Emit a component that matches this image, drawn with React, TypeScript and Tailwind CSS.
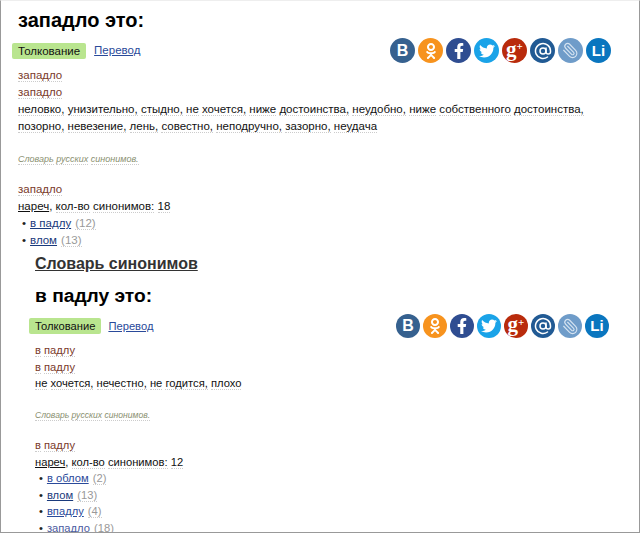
import React from "react";
import { FaOdnoklassniki, FaFacebookF, FaTwitter } from "react-icons/fa";
import { AtSign, Paperclip } from "lucide-react";

const W = ({ children, className = "" }: { children: React.ReactNode; className?: string }) => (
  <span className={"border-b border-dotted border-[#ccc] " + className}>{children}</span>
);

const Words = ({ text, className = "" }: { text: string; className?: string }) => (
  <>
    {text.split(" ").map((w, i, a) => (
      <React.Fragment key={i}>
        <W className={className}>{w}</W>
        {i < a.length - 1 ? " " : ""}
      </React.Fragment>
    ))}
  </>
);

const Social = ({ big }: { big: boolean }) => {
  const c = big ? "h-[25px] w-[25px]" : "h-6 w-6";
  const base = "flex items-center justify-center rounded-full text-white shrink-0 " + c;
  return (
    <div className="flex gap-[3px]">
      <div className={base + " bg-[#36618f] text-[16px] font-bold"}>В</div>
      <div className={base + " bg-[#f7931e]"}><FaOdnoklassniki size={16} /></div>
      <div className={base + " bg-[#2f4d91]"}><FaFacebookF size={16} /></div>
      <div className={base + " bg-[#1aa3e8]"}><FaTwitter size={16} /></div>
      <div className={base + " bg-[#b92b0c] font-['Liberation_Serif',serif] font-bold"}>
        <span className="-mt-[3px] text-[21px] leading-[19px]">g</span>
        <span className="-mt-[8px] text-[11px] leading-[11px]">+</span>
      </div>
      <div className={base + " bg-[#215a94]"}><AtSign size={18} strokeWidth={2} /></div>
      <div className={base + " bg-[#6f9cc9]"}><Paperclip size={17} strokeWidth={1.6} className="-scale-x-100 text-[#d5e3f1]" /></div>
      <div className={base + " bg-[#0a76bf] text-[15px] font-bold"}>Li</div>
    </div>
  );
};

const Tab = ({ gap }: { gap: string }) => (
  <span className={"inline-block h-4 rounded-[2px] bg-[#b9e58f] px-[6px] leading-4 text-[#111] " + gap}>
    Толкование
  </span>
);

const Item = ({ name, n, color = "text-[#1a3a7c]" }: { name: string; n: number; color?: string }) => (
  <li className="flex items-baseline">
    <span className="mr-[4px] text-[#222]">•</span>
    <a className={"underline " + color}>{name}</a>
    <span className="ml-[4px] text-[#999]"><W>({n})</W></span>
  </li>
);

export default function App() {
  return (
    <div className="box-border h-[533px] w-[640px] overflow-hidden border border-[#999] border-t-[#eee] bg-white font-['Liberation_Sans',Arial,sans-serif]">
      {/* first entry */}
      <section className="pl-[17px] text-[11.5px] leading-[17px] text-[#222]">
        <h1 className="mt-[7px] h-[25px] text-[20px] font-bold leading-[25px] text-black">западло это:</h1>
        <div className="mt-[5px] -ml-[6px] flex items-center justify-between pr-[28px]">
          <div className="flex items-center">
            <Tab gap="mr-[8px]" />
            <a className="text-[#2a4a9a] underline">Перевод</a>
          </div>
          <Social big />
        </div>
        <div className="mt-[4px] text-[#7a3a2a]"><W>западло</W></div>
        <div className="text-[#7a3a2a]"><W>западло</W></div>
        <p className="pr-[30px] text-[#111]">
          <Words text="неловко, унизительно, стыдно, не хочется, ниже достоинства, неудобно, ниже собственного достоинства, позорно, невезение, лень, совестно, неподручно, зазорно, неудача" />
        </p>
        <p className="mt-[16px] text-[9px] italic text-[#8a9070]"><Words text="Словарь русских синонимов." /></p>
        <div className="mt-[13px] text-[#7a3a2a]"><W>западло</W></div>
        <div className="text-[#111]">
          <span className="underline">нареч</span>, <Words text="кол-во синонимов: 18" />
        </div>
        <ul className="pl-[4px]">
          <Item name="в падлу" n={12} />
          <Item name="влом" n={13} />
        </ul>
      </section>

      {/* second entry */}
      <section className="pl-[34px] text-[11.2px] leading-[16.5px] text-[#222]">
        <h2 className="mt-[5px] h-[20px] text-[16px] font-bold leading-[20px] text-[#333] underline">Словарь синонимов</h2>
        <h1 className="mt-[10px] h-[24px] text-[19.2px] font-bold leading-[24px] text-black">в падлу это:</h1>
        <div className="mt-[6px] -ml-[6px] flex items-center justify-between pr-[30px]">
          <div className="flex items-center">
            <Tab gap="mr-[7px]" />
            <a className="text-[#2a4a9a] underline">Перевод</a>
          </div>
          <Social big={false} />
        </div>
        <div className="mt-[4px] text-[#7a3a2a]"><W>в</W> <W>падлу</W></div>
        <div className="text-[#7a3a2a]"><W>в</W> <W>падлу</W></div>
        <p className="text-[#111]"><Words text="не хочется, нечестно, не годится, плохо" /></p>
        <p className="mt-[15px] text-[8.6px] italic text-[#8a9070]"><Words text="Словарь русских синонимов." /></p>
        <div className="mt-[14px] text-[#7a3a2a]"><W>в</W> <W>падлу</W></div>
        <div className="text-[#111]">
          <span className="underline">нареч</span>, <Words text="кол-во синонимов: 12" />
        </div>
        <ul className="pl-[4px]">
          <Item name="в облом" n={2} color="text-[#2a4a9a]" />
          <Item name="влом" n={13} />
          <Item name="впадлу" n={4} color="text-[#2a4a9a]" />
          <Item name="западло" n={18} color="text-[#4a5aa0]" />
        </ul>
      </section>
    </div>
  );
}
